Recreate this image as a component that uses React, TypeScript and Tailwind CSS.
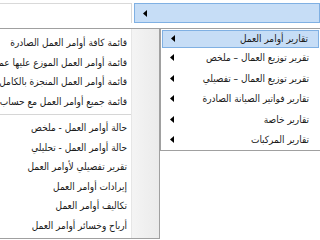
import React from "react";

const Arrow = () => (
  <svg width="4" height="7" viewBox="0 0 4 7" className="block">
    <path d="M4 0 L0 3.5 L4 7 Z" fill="#000" />
  </svg>
);

const leftItems1 = [
  "قائمة كافة أوامر العمل الصادرة",
  "قائمة أوامر العمل الموزع عليها عمال",
  "قائمة أوامر العمل المنجزة بالكامل",
  "قائمة جميع أوامر العمل مع حساب التكاليف",
];
const leftItems2 = [
  "حالة أوامر العمل - ملخص",
  "حالة أوامر العمل - تحليلي",
  "تقرير تفصيلي لأوامر العمل",
  "إيرادات أوامر العمل",
  "تكاليف أوامر العمل",
  "أرباح وخسائر أوامر العمل",
];
const rightItems = [
  "تقرير توزيع العمال – ملخص",
  "تقرير توزيع العمال – تفصيلي",
  "تقارير فواتير الصيانة الصادرة",
  "تقارير خاصة",
  "تقارير المركبات",
];

const LeftItem = ({ t }: { t: string }) => (
  <div className="h-[19.5px] flex items-center justify-end pr-[4px] whitespace-nowrap overflow-hidden">
    <span dir="rtl">{t}</span>
  </div>
);

export default function App() {
  return (
    <div
      className="w-[320px] h-[240px] bg-white relative overflow-hidden text-[10px] font-stretch-semi-condensed text-[#1a1a1a]"
      style={{ fontFamily: '"DejaVu Sans", sans-serif' }}
    >
      <div className="flex pt-[3px] h-[28px]">
        <div className="w-[132px] h-[20px] border-t border-r border-[#d9d9d9] bg-white" />
        <div className="w-[2px]" />
        <div className="flex-1 h-[20px] border border-[#7fb0e3] bg-[#c6ddf6] flex items-center pl-[8px]">
          <Arrow />
        </div>
      </div>
      <div className="flex items-start">
        <div className="w-[160px] h-[211px] flex border-t border-r border-b border-[#a0a0a0] bg-white">
          <div className="w-[131px] shrink-0 pt-[4px] flex flex-col">
            {leftItems1.map((t) => (
              <LeftItem key={t} t={t} />
            ))}
            <div className="h-[7px] flex items-center">
              <div className="w-full h-px bg-[#d6d6d6]" />
            </div>
            {leftItems2.map((t) => (
              <LeftItem key={t} t={t} />
            ))}
          </div>
          <div className="flex-1 border-l border-[#e6e6e6] bg-gradient-to-r from-[#f4f4f4] to-[#ebebeb]" />
        </div>
        <div className="flex-1 h-[123px] border-t border-b border-l border-[#a0a0a0] bg-white flex flex-col pt-[1px]">
          <div className="h-[18px] mx-[1px] border border-[#7fb0e3] bg-[#c6ddf6] flex items-center justify-between pl-[8px] pr-[10px]">
            <Arrow />
            <span dir="rtl">تقارير أوامر العمل</span>
          </div>
          {rightItems.map((t) => (
            <div key={t} className="h-[20.8px] flex items-center justify-between pl-[9px] pr-[11px]">
              <Arrow />
              <span dir="rtl">{t}</span>
            </div>
          ))}
        </div>
      </div>
    </div>
  );
}
